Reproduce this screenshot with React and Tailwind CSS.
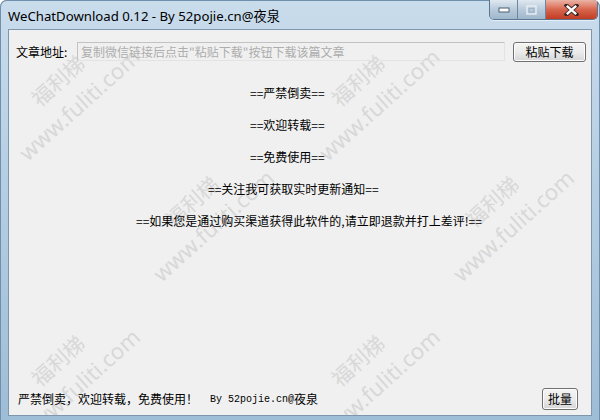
import React from 'react';

const marks = [
  'left-[59px] top-[62px]',
  'left-[359px] top-[62px]',
  'left-[59px] top-[342px]',
  'left-[359px] top-[342px]',
  'left-[193px] top-[183px]',
  'left-[493px] top-[183px]',
  'left-[-107px] top-[183px]',
  'left-[193px] top-[-97px]',
  'left-[493px] top-[-97px]',
  'left-[193px] top-[463px]',
  'left-[493px] top-[463px]',
];

// each notice is its own label, placed like in the designer
const lines = [
  { text: '==严禁倒卖==', pos: 'ml-[241px]' },
  { text: '==欢迎转载==', pos: 'ml-[241px]' },
  { text: '==免费使用==', pos: 'ml-[241px]' },
  { text: '==关注我可获取实时更新通知==', pos: 'ml-[199px]' },
  { text: '==如果您是通过购买渠道获得此软件的,请立即退款并打上差评!==', pos: 'ml-[127px]' },
];

function WinButton({ children, className = '' }) {
  return (
    <button
      type="button"
      className={`rounded-[3px] border border-[#707070] bg-gradient-to-b from-[#f4f4f4] via-[#ebebeb] to-[#d6d6d6] text-[12px] text-black shadow-[inset_0_0_0_1px_#fcfcfc] ${className}`}
    >
      {children}
    </button>
  );
}

function CaptionButtons() {
  return (
    <div className="flex h-[20px] self-start overflow-hidden rounded-b-[5px] border border-t-0 border-[#5b7590] shadow-[0_1px_0_#e6eef5]">
      <div className="flex w-[28px] items-center justify-center border-r border-[#6f879e] bg-gradient-to-b from-[#dfe8f0] via-[#b8cadb] to-[#9fb7cc]">
        <svg width="12" height="6" viewBox="0 0 12 6">
          <rect x="1" y="1" width="10" height="4" fill="#fff" stroke="#4a5f74" strokeWidth="1" />
        </svg>
      </div>
      <div className="flex w-[28px] items-center justify-center border-r border-[#6f879e] bg-gradient-to-b from-[#dfe8f0] via-[#b8cadb] to-[#9fb7cc]">
        <svg width="11" height="10" viewBox="0 0 11 10">
          <rect x="1" y="1" width="9" height="8" fill="none" stroke="#e8eef4" strokeWidth="1.4" />
          <rect x="3" y="3.5" width="5" height="3.5" fill="none" stroke="#9db2c6" strokeWidth="1" />
        </svg>
      </div>
      <div className="flex w-[51px] items-center justify-center bg-gradient-to-b from-[#eab3a6] via-[#d8654d] to-[#c23a22]">
        <svg width="15" height="12" viewBox="0 0 15 12">
          <path d="M2.5 1.5 L12.5 10.5 M12.5 1.5 L2.5 10.5" stroke="#3d2a28" strokeWidth="4.2" strokeLinecap="square" />
          <path d="M2.8 1.8 L12.2 10.2 M12.2 1.8 L2.8 10.2" stroke="#fff" strokeWidth="2.4" />
        </svg>
      </div>
    </div>
  );
}

export default function App() {
  return (
    <div className="flex h-[420px] w-[600px] flex-col overflow-hidden rounded-t-[7px] bg-gradient-to-b from-[#c9dcec] via-[#b3cce1] to-[#9ebdd6] font-['Noto_Sans','Noto_Sans_CJK_SC',sans-serif] shadow-[inset_1px_0_0_#6f90ad,inset_-1px_0_0_#6f90ad,inset_0_1px_0_#6f90ad]">
      {/* title bar */}
      <div className="flex h-[29px] shrink-0 justify-between pl-[8px] pr-[2px]">
        <div className="self-center pt-[3px] text-[13.2px] leading-[20px] text-black">
          WeChatDownload 0.12 - By 52pojie.cn@夜泉
        </div>
        <CaptionButtons />
      </div>

      {/* client area */}
      <div className="relative mx-[8px] flex h-[387px] flex-col overflow-hidden border border-[#7d97ae] bg-[#f0f0f0] font-['Noto_Sans_CJK_SC',sans-serif] text-[12px] text-black">
        {/* watermark */}
        <div className="pointer-events-none absolute inset-0">
          {marks.map((pos) => (
            <div
              key={pos}
              className={`absolute ${pos} -translate-x-1/2 -translate-y-1/2 rotate-[-42deg] whitespace-nowrap text-center text-[21px] leading-[32px] text-[#d8d8d8]`}
            >
              <div>福利梯</div>
              <div className="font-['Noto_Sans',sans-serif] text-[22px]">www.fuliti.com</div>
            </div>
          ))}
        </div>

        <div className="relative flex flex-1 flex-col">
          {/* url row */}
          <div className="flex items-start pl-[7px] pr-[5px] pt-[12px]">
            <span className="w-[61px] leading-[20px]">文章地址:</span>
            <div className="flex h-[19px] w-[428px] items-center border border-[#c2c2c2] border-r-[#e3e3e3] border-b-[#e3e3e3] pl-[3px] leading-none text-[#adadad]">
              复制微信链接后点击"粘贴下载"按钮下载该篇文章
            </div>
            <WinButton className="ml-[8px] h-[20px] w-[73px]">粘贴下载</WinButton>
          </div>

          {/* notices */}
          <div className="mt-[15px] flex flex-col items-start">
            {lines.map((l) => (
              <div key={l.text} className={`h-[32px] leading-[32px] ${l.pos}`}>
                {l.text}
              </div>
            ))}
          </div>

          <div className="flex-1" />

          {/* status row */}
          <div className="flex items-center justify-between pb-[5px] pl-[9px] pr-[13px]">
            <div className="flex items-center whitespace-pre">
              <span>严禁倒卖，欢迎转载，免费使用！</span>
              <span className="ml-[12px] font-['Liberation_Mono',monospace] text-[10px]">By 52pojie.cn@</span>
              <span>夜泉</span>
            </div>
            <WinButton className="h-[22px] w-[36px]">批量</WinButton>
          </div>
        </div>
      </div>
    </div>
  );
}
